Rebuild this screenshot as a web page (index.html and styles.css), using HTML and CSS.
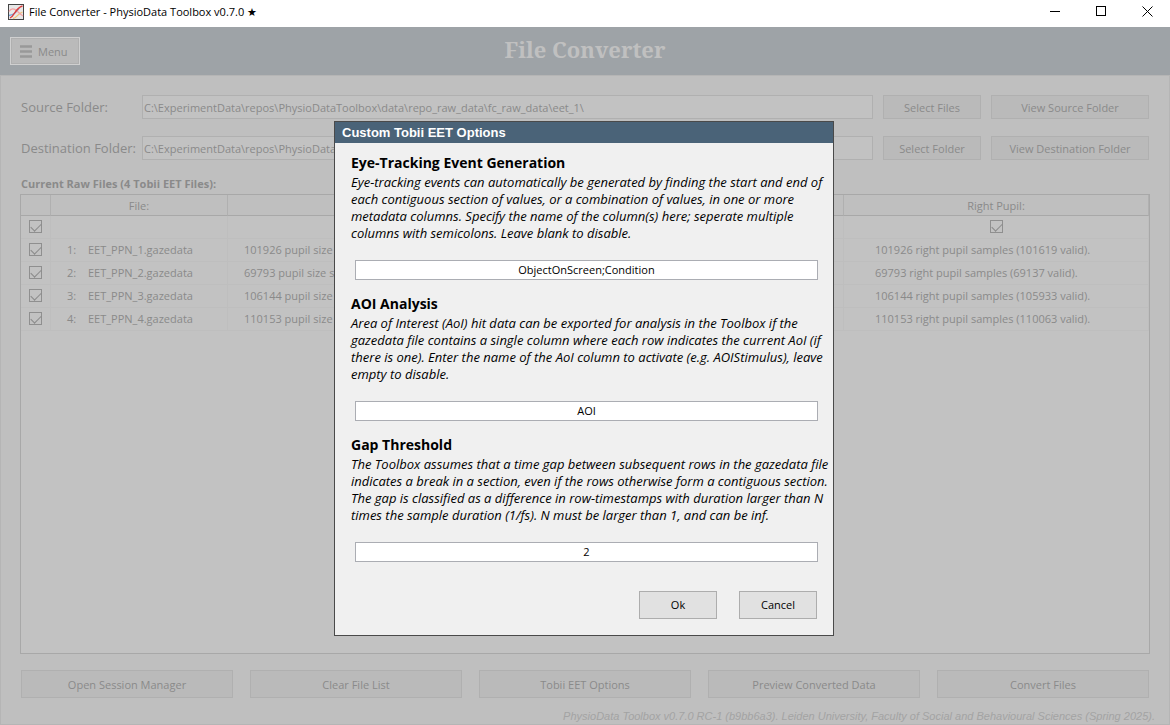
FILE: index.html
```html
<!DOCTYPE html>
<html lang="en">
<head>
  <meta charset="UTF-8">
  <meta name="viewport" content="width=device-width, initial-scale=1.0">
  <title>File Converter - PhysioData Toolbox v0.7.0</title>
  <link rel="stylesheet" href="styles.css">
</head>
<body>
  <div class="titlebar">
    <svg class="app-icon" width="16" height="16" viewBox="0 0 16 16" fill="none">
      <rect x="0.5" y="0.5" width="15" height="15" fill="#e8e8e8" stroke="#444"/>
      <path d="M5 14.5C9 14 9 10 14.5 8" stroke="#f2c27a" stroke-width="1.3"/>
      <path d="M1 11.5C5 11 8 9 11 4.5" stroke="#6f9fd8" stroke-width="1.3"/>
      <path d="M1 7.5C3 4 6 4 9 7S12 10 15 12" stroke="#f4a3a3" stroke-width="1.3"/>
      <path d="M2 14C7 12 7 4 14.5 2" stroke="#dc3c3c" stroke-width="1.3"/>
    </svg>
    <span class="titlebar-text">File Converter - PhysioData Toolbox v0.7.0 <span class="star">★</span></span>
    <div class="window-controls">
      <button type="button" aria-label="Minimize"><svg width="11" height="11" viewBox="0 0 11 11"><path d="M0 5.5H10" stroke="#000"/></svg></button>
      <button type="button" aria-label="Maximize"><svg width="11" height="11" viewBox="0 0 11 11"><rect x="0.5" y="0.5" width="9" height="9" fill="none" stroke="#000"/></svg></button>
      <button type="button" aria-label="Close"><svg width="11" height="11" viewBox="0 0 11 11"><path d="M0.5 0.5L10.5 10.5M10.5 0.5L0.5 10.5" stroke="#000"/></svg></button>
    </div>
  </div>

  <div class="app">
    <header class="header">
      <button type="button" class="menu-btn">
        <svg width="12" height="13" viewBox="0 0 12 13"><path d="M0 1.5H12M0 6.5H12M0 11.5H12" stroke="#999" stroke-width="2.4"/></svg>
        Menu
      </button>
      <h1>File Converter</h1>
    </header>

    <main class="panel">
      <div class="folders">
        <label for="source">Source Folder:</label>
        <input type="text" id="source" value="C:\ExperimentData\repos\PhysioDataToolbox\data\repo_raw_data\fc_raw_data\eet_1\">
        <button type="button" class="btn">Select Files</button>
        <button type="button" class="btn">View Source Folder</button>
        <label for="destination">Destination Folder:</label>
        <input type="text" id="destination" value="C:\ExperimentData\repos\PhysioDataToolbox\data\repo_raw_data\fc_raw_data\eet_1\">
        <button type="button" class="btn">Select Folder</button>
        <button type="button" class="btn">View Destination Folder</button>
      </div>

      <h2 class="files-title">Current Raw Files (4 Tobii EET Files):</h2>
      <div class="files">
        <table>
          <colgroup><col class="col-check"><col class="col-file"><col><col class="col-right"></colgroup>
          <thead>
            <tr><th></th><th>File:</th><th></th><th>Right Pupil:</th></tr>
          </thead>
          <tbody>
            <tr>
              <td class="check"><input type="checkbox" aria-label="All files" checked></td>
              <td></td>
              <td></td>
              <td class="check"><input type="checkbox" aria-label="Right pupil" checked></td>
            </tr>
            <tr>
              <td class="check"><input type="checkbox" aria-label="EET_PPN_1.gazedata" checked></td>
              <td><span class="num">1:</span>EET_PPN_1.gazedata</td>
              <td>101926 pupil size samples.</td>
              <td class="pupil">101926 right pupil samples (101619 valid).</td>
            </tr>
            <tr>
              <td class="check"><input type="checkbox" aria-label="EET_PPN_2.gazedata" checked></td>
              <td><span class="num">2:</span>EET_PPN_2.gazedata</td>
              <td>69793 pupil size samples.</td>
              <td class="pupil">69793 right pupil samples (69137 valid).</td>
            </tr>
            <tr>
              <td class="check"><input type="checkbox" aria-label="EET_PPN_3.gazedata" checked></td>
              <td><span class="num">3:</span>EET_PPN_3.gazedata</td>
              <td>106144 pupil size samples.</td>
              <td class="pupil">106144 right pupil samples (105933 valid).</td>
            </tr>
            <tr>
              <td class="check"><input type="checkbox" aria-label="EET_PPN_4.gazedata" checked></td>
              <td><span class="num">4:</span>EET_PPN_4.gazedata</td>
              <td>110153 pupil size samples.</td>
              <td class="pupil">110153 right pupil samples (110063 valid).</td>
            </tr>
          </tbody>
        </table>
      </div>

      <div class="actions">
        <button type="button" class="btn">Open Session Manager</button>
        <button type="button" class="btn">Clear File List</button>
        <button type="button" class="btn">Tobii EET Options</button>
        <button type="button" class="btn">Preview Converted Data</button>
        <button type="button" class="btn">Convert Files</button>
      </div>
      <footer class="footer">PhysioData Toolbox v0.7.0 RC-1 (b9bb6a3). Leiden University, Faculty of Social and Behavioural Sciences (Spring 2025).</footer>
    </main>

    <div class="overlay">
      <form class="dialog" role="dialog" aria-labelledby="dialogTitle">
        <div class="dialog-title" id="dialogTitle">Custom Tobii EET Options</div>
        <div class="dialog-body">
          <section class="option">
            <h3><label for="events">Eye-Tracking Event Generation</label></h3>
            <p>Eye-tracking events can automatically be generated by finding the start and end of<br>
              each contiguous section of values, or a combination of values, in one or more<br>
              metadata columns. Specify the name of the column(s) here; seperate multiple<br>
              columns with semicolons. Leave blank to disable.</p>
            <input type="text" id="events" value="ObjectOnScreen;Condition">
          </section>
          <section class="option">
            <h3><label for="aoi">AOI Analysis</label></h3>
            <p>Area of Interest (AoI) hit data can be exported for analysis in the Toolbox if the<br>
              gazedata file contains a single column where each row indicates the current AoI (if<br>
              there is one). Enter the name of the AoI column to activate (e.g. AOIStimulus), leave<br>
              empty to disable.</p>
            <input type="text" id="aoi" value="AOI">
          </section>
          <section class="option">
            <h3><label for="gap">Gap Threshold</label></h3>
            <p>The Toolbox assumes that a time gap between subsequent rows in the gazedata file<br>
              indicates a break in a section, even if the rows otherwise form a contiguous section.<br>
              The gap is classified as a difference in row-timestamps with duration larger than N<br>
              times the sample duration (1/fs). N must be larger than 1, and can be inf.</p>
            <input type="text" id="gap" value="2">
          </section>
          <div class="dialog-buttons">
            <button type="button">Ok</button>
            <button type="button">Cancel</button>
          </div>
        </div>
      </form>
    </div>
  </div>
</body>
</html>
```
FILE: styles.css
```css
* {
  box-sizing: border-box;
}
body {
  margin: 0;
  min-height: 100vh;
  display: flex;
  flex-direction: column;
  font-family: "Open Sans", "Noto Sans", sans-serif;
  font-size: 11px;
  color: #000;
  background: #bfbfbf;
}
button, input {
  font: inherit;
  color: inherit;
  margin: 0;
}
h1, h2, h3, p {
  margin: 0;
}

/* window title bar */
.titlebar {
  display: flex;
  align-items: center;
  height: 27px;
  padding-left: 8px;
  padding-bottom: 4px;
  background: #fff;
}
.titlebar-text {
  margin-left: 5px;
}
.star {
  font-family: "DejaVu Sans", sans-serif;
}
.window-controls {
  display: flex;
  margin-left: auto;
}
.window-controls button {
  display: flex;
  align-items: center;
  justify-content: center;
  width: 46px;
  height: 22px;
  padding: 0;
  border: none;
  background: none;
}

.app {
  position: relative;
  flex: 1;
  display: flex;
  flex-direction: column;
  color: #8a8a8a;
}
.header {
  display: grid;
  grid-template-columns: 1fr auto 1fr;
  align-items: center;
  height: 48px;
  padding: 0 10px;
  background: #9ea3a7;
}
.header h1 {
  padding-bottom: 4px;
  font-family: "Noto Serif", Cambria, "Liberation Serif", serif;
  font-size: 22px;
  line-height: 30px;
  color: #c0c0c0;
}
.menu-btn {
  display: flex;
  align-items: center;
  gap: 6px;
  width: 70px;
  height: 28px;
  padding: 0 9px;
  border: 1px solid #d0d0d0;
  background: #bababa;
  box-shadow: inset 0 0 0 1px #b0b0b0;
}

.panel {
  flex: 1;
  display: flex;
  flex-direction: column;
  padding: 19px 20px 0;
  border: 1px solid #b5b5b5;
}
.folders {
  display: grid;
  grid-template-columns: 111px 1fr 98px 158px;
  gap: 17px 10px;
  align-items: center;
}
.folders label {
  font-size: 13px;
  line-height: 24px;
  white-space: nowrap;
}
.folders input {
  height: 24px;
  padding: 0 1px;
  border: 1px solid #b0b0b0;
  background: #c2c2c2;
}
.btn {
  height: 24px;
  padding: 0;
  border: 1px solid #b0b0b0;
  background: #bababa;
  white-space: nowrap;
}

.files-title {
  margin-top: 15px;
  font-size: 11px;
  line-height: 18px;
}
.files {
  flex: 1;
  margin: 1px -1px 0;
  border: 1px solid #a8a8a8;
  background: #c2c2c2;
}
.files table {
  width: 100%;
  table-layout: fixed;
  border-collapse: separate;
  border-spacing: 0;
}
.col-check {
  width: 30px;
}
.col-file {
  width: 177px;
}
.col-right {
  width: 305px;
}
.files th {
  height: 21px;
  padding: 0;
  font-weight: normal;
  background: #bfbfbf;
  border-right: 1px solid #b0b0b0;
  border-bottom: 1px solid #a8a8a8;
}
.files td {
  height: 23px;
  padding: 0 16px 2px;
  border-right: 1px solid #bebebe;
  border-bottom: 1px solid #bebebe;
  white-space: nowrap;
}
.files .check {
  padding: 0 0 2px;
  text-align: center;
}
.files .pupil {
  padding-left: 31px;
}
.num {
  display: inline-block;
  width: 21px;
}
input[type="checkbox"] {
  appearance: none;
  display: block;
  width: 13px;
  height: 13px;
  margin: 0 auto;
  border: 1px solid #8f8f8f;
}
input[type="checkbox"]:checked::after {
  content: "";
  display: block;
  width: 9px;
  height: 5px;
  margin: 2px 1px;
  border-left: 1px solid #8a8a8a;
  border-bottom: 1px solid #8a8a8a;
  transform: rotate(-45deg);
}

.actions {
  display: grid;
  grid-template-columns: repeat(5, 1fr);
  gap: 17px;
  margin-top: 16px;
}
.actions .btn {
  height: 28px;
}
.footer {
  margin: 10px -6px 0 0;
  font-family: "Liberation Sans", Arial, sans-serif;
  font-size: 11px;
  font-style: italic;
  line-height: 16px;
  text-align: right;
  color: #a3a3a3;
}

/* options dialog */
.overlay {
  position: absolute;
  inset: 0;
  display: flex;
  align-items: center;
  justify-content: center;
  padding-top: 4px;
  padding-right: 2px;
}
.dialog {
  width: 500px;
  border: 1px solid #4a4a4a;
  background: #f0f0f0;
  color: #000;
}
.dialog-title {
  padding-left: 7px;
  font-family: "Liberation Sans", Arial, sans-serif;
  font-size: 13px;
  font-weight: bold;
  line-height: 21px;
  color: #fff;
  background: #4a6378;
}
.dialog-body {
  padding: 9px 15px 16px 16px;
}
.option {
  margin-bottom: 13px;
}
.option h3 {
  font-size: 14px;
  line-height: 22px;
}
.option p {
  font-size: 13px;
  font-style: italic;
  line-height: 17px;
  white-space: nowrap;
}
.option input {
  display: block;
  width: calc(100% - 4px);
  height: 20px;
  margin: 18px 0 0 4px;
  padding: 0;
  border: 1px solid #abadb3;
  background: #fff;
  text-align: center;
}
.dialog-buttons {
  display: flex;
  justify-content: flex-end;
  gap: 22px;
  margin-top: 29px;
  padding-right: 1px;
}
.dialog-buttons button {
  width: 78px;
  height: 28px;
  padding: 0;
  border: 1px solid #adadad;
  background: #e1e1e1;
}
```
